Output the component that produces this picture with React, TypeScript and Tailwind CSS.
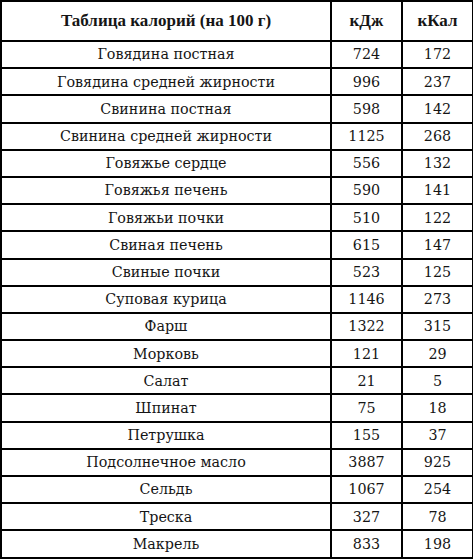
const rows: [string, string, string][] = [
  ['Говядина постная', '724', '172'],
  ['Говядина средней жирности', '996', '237'],
  ['Свинина постная', '598', '142'],
  ['Свинина средней жирности', '1125', '268'],
  ['Говяжье сердце', '556', '132'],
  ['Говяжья печень', '590', '141'],
  ['Говяжьи почки', '510', '122'],
  ['Свиная печень', '615', '147'],
  ['Свиные почки', '523', '125'],
  ['Суповая курица', '1146', '273'],
  ['Фарш', '1322', '315'],
  ['Морковь', '121', '29'],
  ['Салат', '21', '5'],
  ['Шпинат', '75', '18'],
  ['Петрушка', '155', '37'],
  ['Подсолнечное масло', '3887', '925'],
  ['Сельдь', '1067', '254'],
  ['Треска', '327', '78'],
  ['Макрель', '833', '198'],
]

export default function App() {
  return (
    <div className="w-[473px] h-[559px] bg-white font-['DejaVu_Serif',serif] text-[#151515]">
      <table className="w-[472px] border-collapse border-2 border-black table-fixed">
        <colgroup>
          <col className="w-[330px]" />
          <col className="w-[71px]" />
          <col className="w-[71px]" />
        </colgroup>
        <thead>
          <tr className="h-[40px] text-[17px] font-bold font-['Liberation_Serif',serif]">
            <th className="border-2 border-black">Таблица калорий (на 100 г)</th>
            <th className="border-2 border-black">кДж</th>
            <th className="border-2 border-black">кКал</th>
          </tr>
        </thead>
        <tbody>
          {rows.map(([name, kj, kcal]) => (
            <tr key={name} className="h-[27.2px] text-[14.3px] leading-none">
              <td className="border-2 border-black text-center">{name}</td>
              <td className="border-2 border-black text-center">{kj}</td>
              <td className="border-2 border-black text-center">{kcal}</td>
            </tr>
          ))}
        </tbody>
      </table>
    </div>
  )
}
